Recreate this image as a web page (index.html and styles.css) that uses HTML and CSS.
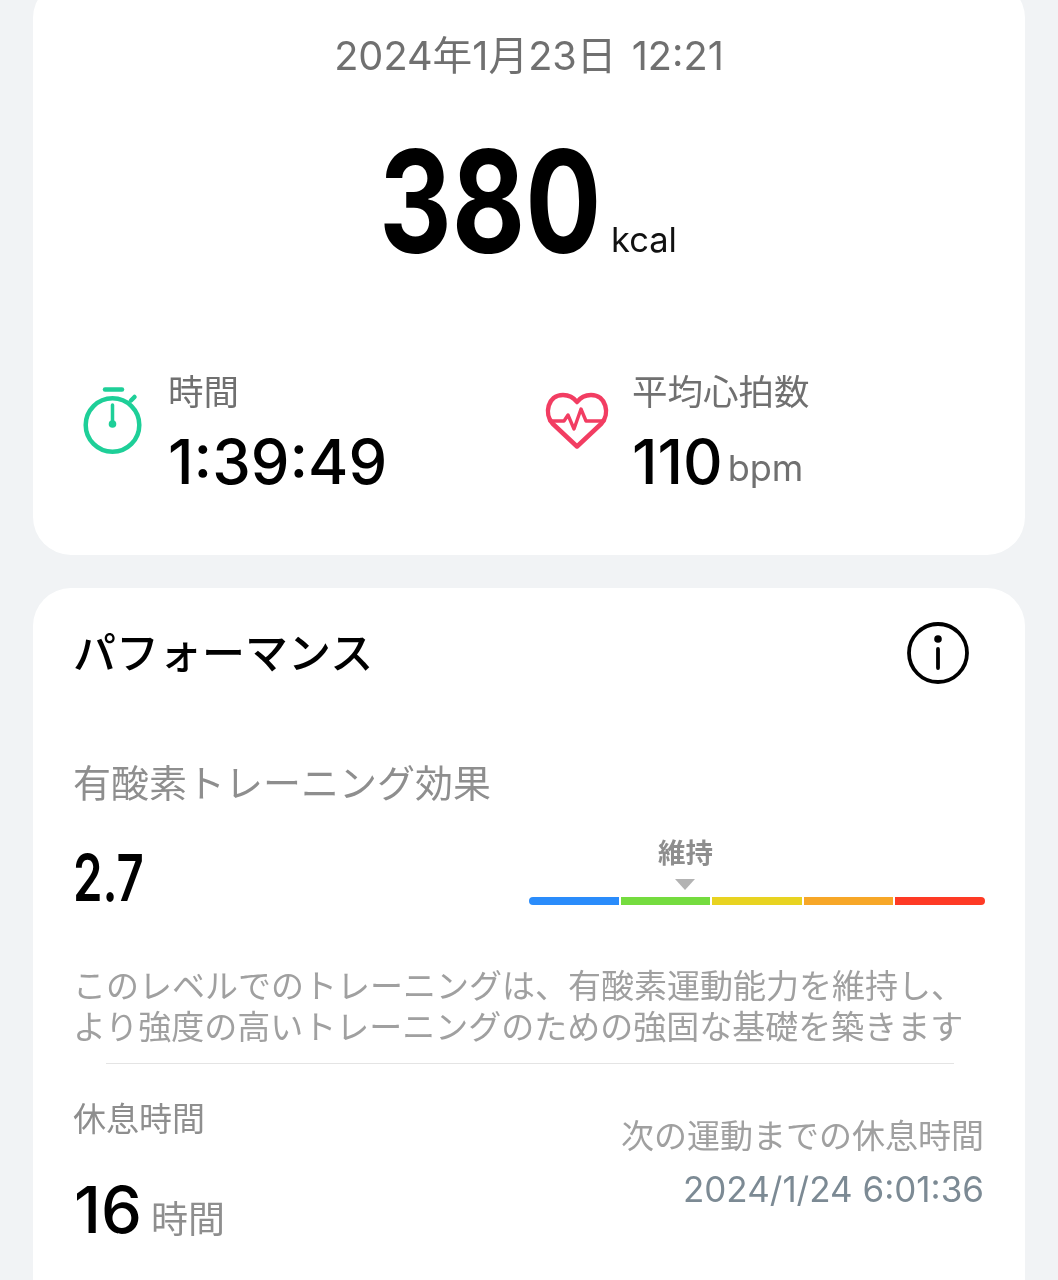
FILE: index.html
```html
<!DOCTYPE html>
<html lang="ja">
<head>
<meta charset="utf-8">
<title>ワークアウト</title>
<link rel="stylesheet" href="styles.css">
</head>
<body>
<main class="page">
  <section class="card summary">
    <div class="date">2024年1月23日 12:21</div>
    <div class="calories"><span class="cal-num">380</span><span class="cal-unit">kcal</span></div>
    <div class="stats">
      <div class="stat stat-time">
        <svg class="stat-icon" width="60" height="68" viewBox="0 0 60 68" fill="none">
          <path d="M23 2.500H40" stroke="#1ecf98" stroke-width="4.500" stroke-linecap="round"/>
          <path d="M49 13.500L52.500 10" stroke="#1ecf98" stroke-width="4.500" stroke-linecap="round"/>
          <circle cx="30.500" cy="38" r="26.800" stroke="#1ecf98" stroke-width="4.500"/>
          <path d="M30.500 18V38" stroke="#1ecf98" stroke-width="3.500" stroke-linecap="round"/>
          <circle cx="30.500" cy="37" r="3.800" fill="#1ecf98"/>
        </svg>
        <div class="stat-text">
          <div class="stat-label">時間</div>
          <div class="stat-value">1:39:49</div>
        </div>
      </div>
      <div class="stat stat-heart">
        <svg class="stat-icon" width="64" height="58" viewBox="0 0 64 58" fill="none">
          <path d="M32 54.500L7.500 31.500C-1 22 2.500 3 18 3C24 3 29 6 32 10C35 6 40 3 46 3C61.500 3 65 22 56.500 31.500Z" stroke="#f23d62" stroke-width="4.500" stroke-linejoin="round"/>
          <path d="M5 29H19L23 23L29 37L36 17L41 29H59" stroke="#f23d62" stroke-width="3.400" stroke-linejoin="round" stroke-linecap="round"/>
        </svg>
        <div class="stat-text">
          <div class="stat-label">平均心拍数</div>
          <div class="stat-value">110<span class="stat-unit">bpm</span></div>
        </div>
      </div>
    </div>
  </section>

  <section class="card perf">
    <header class="perf-head">
      <h2 class="perf-title">パフォーマンス</h2>
      <svg class="info" width="62" height="62" viewBox="0 0 62 62" fill="none">
        <circle cx="31" cy="31" r="29" stroke="#000" stroke-width="3.800"/>
        <circle cx="31" cy="17" r="3.800" fill="#000"/>
        <path d="M31 27V46" stroke="#000" stroke-width="3.800" stroke-linecap="round"/>
      </svg>
    </header>
    <div class="effect-label">有酸素トレーニング効果</div>
    <div class="effect-row">
      <div class="effect-num">2.7</div>
      <div class="gauge">
        <div class="gauge-label">維持</div>
        <div class="gauge-mark"></div>
        <div class="gauge-bar">
          <span class="seg seg-blue"></span>
          <span class="seg seg-green"></span>
          <span class="seg seg-yellow"></span>
          <span class="seg seg-orange"></span>
          <span class="seg seg-red"></span>
        </div>
      </div>
    </div>
    <p class="desc">このレベルでのトレーニングは、有酸素運動能力を維持し、<br>より強度の高いトレーニングのための強固な基礎を築きます</p>
    <div class="rule"></div>
    <div class="rest">
      <div class="rest-left">
        <div class="rest-label">休息時間</div>
        <div class="rest-value">16<span class="rest-unit">時間</span></div>
      </div>
      <div class="rest-right">
        <div class="next-label">次の運動までの休息時間</div>
        <div class="next-date">2024/1/24 6:01:36</div>
      </div>
    </div>
  </section>
</main>
</body>
</html>
```
FILE: styles.css
```css
html, body {
  margin: 0;
  padding: 0;
  height: 1280px;
  overflow: hidden;
  background: #f1f3f5;
}
body {
  font-family: "Inter", "Noto Sans CJK JP", sans-serif;
  color: #000;
}
.page {
  display: flex;
  flex-direction: column;
  gap: 33px;
  padding: 0 33px;
  margin-top: -20px;
  will-change: transform;
}
.card {
  background: #fff;
  border-radius: 38px;
}
.summary {
  height: 575px;
  box-sizing: border-box;
  padding-top: 53px;
}
.date {
  text-align: center;
  font-size: 39.700px;
  line-height: 46px;
  word-spacing: 4px;
  color: #707070;
}
.calories {
  display: flex;
  justify-content: center;
  align-items: baseline;
  margin-top: 42px;
  padding-left: 5px;
}
.cal-num {
  display: inline-block;
  width: 213px;
  margin-left: -7px;
  font-weight: 650;
  font-size: 142px;
  line-height: 160px;
  transform: scaleX(0.795);
  transform-origin: left center;
}
.cal-unit {
  font-size: 34.500px;
  margin-left: 19px;
  color: #111;
  transform: translateY(-1px);
}
.stats {
  display: flex;
  margin-top: 92px;
}
.stat {
  display: flex;
  align-items: flex-start;
}
.stat-icon {
  margin-top: 14px;
}
.stat-time {
  width: 512px;
  padding-left: 49px;
  box-sizing: border-box;
  gap: 26px;
}
.stat-heart {
  gap: 23px;
}
.stat-heart .stat-icon {
  margin-top: 19px;
}
.stat-text {
  display: flex;
  flex-direction: column;
}
.stat-label {
  font-size: 35.500px;
  line-height: 40px;
  color: #707070;
}
.stat-value {
  font-size: 61.500px;
  line-height: 72px;
  font-weight: 500;
  margin-top: 13px;
}
.stat-unit {
  font-size: 36px;
  font-weight: 400;
  color: #707070;
  margin-left: 5px;
  vertical-align: 3px;
}
.perf {
  height: 692px;
  box-sizing: border-box;
  padding: 34px 40px 0 41px;
  border-radius: 38px 38px 0 0;
}
.perf-head {
  display: flex;
  justify-content: space-between;
  align-items: center;
  padding-right: 16px;
}
.perf-title {
  margin: 0;
  font-size: 43px;
  line-height: 62px;
  font-weight: 500;
  margin-left: -1px;
}
.effect-label {
  margin-top: 74px;
  margin-left: -1px;
  font-size: 38px;
  line-height: 50px;
  color: #8e8e8e;
}
.effect-row {
  display: flex;
  justify-content: space-between;
  align-items: flex-end;
  margin-top: 27px;
}
.effect-num {
  width: 69px;
  margin-left: -1px;
  margin-bottom: -5px;
  font-weight: 600;
  font-size: 64px;
  line-height: 72px;
  transform: scaleX(0.74);
  transform-origin: left center;
}
.gauge {
  width: 456px;
  margin-bottom: 4px;
  display: flex;
  flex-direction: column;
}
.gauge-label {
  margin-left: 129px;
  font-size: 27.500px;
  line-height: 36px;
  font-weight: 600;
  color: #8e8e8e;
}
.gauge-mark {
  width: 0;
  height: 0;
  margin: 8px 0 7px 146px;
  border-left: 10px solid transparent;
  border-right: 10px solid transparent;
  border-top: 11px solid #b3b3b3;
}
.gauge-bar {
  display: flex;
  gap: 2px;
  height: 8px;
}
.seg {
  flex: 1;
}
.seg-blue { background: #2a8cfb; border-radius: 4px 0 0 4px; }
.seg-green { background: #75dc3f; }
.seg-yellow { background: #e8d321; }
.seg-orange { background: #f7a728; }
.seg-red { background: #fe3a25; border-radius: 0 4px 4px 0; }
.desc {
  margin: 57px 0 0 -1px;
  font-size: 33px;
  line-height: 41px;
  color: #a0a0a0;
  white-space: nowrap;
}
.rule {
  height: 1px;
  background: #e4e4e4;
  margin: 15px 31px 0 32px;
}
.rest {
  display: flex;
  justify-content: space-between;
}
.rest-label {
  margin-top: 32px;
  margin-left: -1px;
  font-size: 33px;
  line-height: 46px;
  color: #8e8e8e;
}
.rest-value {
  margin-top: 30px;
  font-size: 65px;
  line-height: 76px;
  font-weight: 500;
}
.rest-unit {
  font-size: 37px;
  font-weight: 400;
  color: #8e8e8e;
  margin-left: 9px;
}
.rest-right {
  text-align: right;
  margin-top: 49px;
  margin-right: 1px;
}
.next-label {
  font-size: 33px;
  line-height: 46px;
  color: #a0a0a0;
}
.next-date {
  margin-top: 7px;
  font-size: 35px;
  line-height: 46px;
  color: #7c8a94;
}
```
